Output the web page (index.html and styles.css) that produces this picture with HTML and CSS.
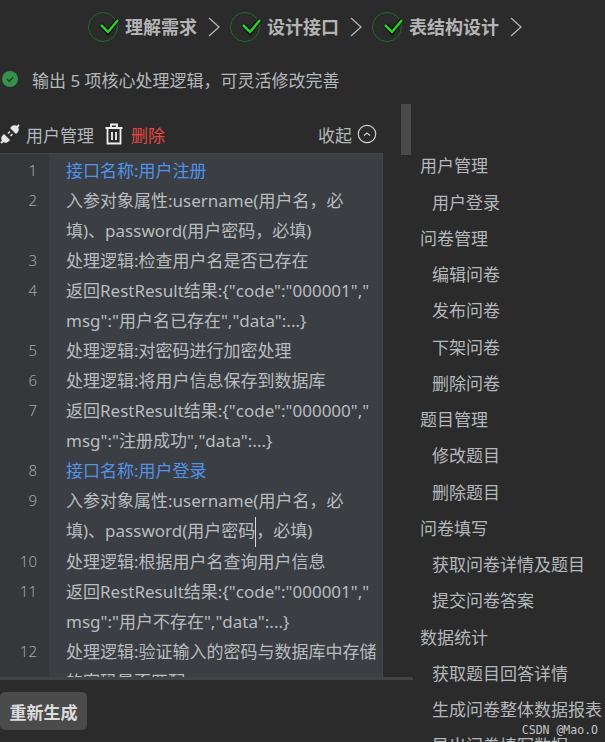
FILE: index.html
```html
<!DOCTYPE html>
<html lang="zh-CN">
<head>
  <meta charset="UTF-8" />
  <meta name="viewport" content="width=device-width, initial-scale=1.0"/>
  <title>核心处理逻辑</title>
  <link rel="stylesheet" href="styles.css">
</head>
<body>
  <div class="page">
    <!-- 顶部步骤 -->
    <div class="steps">
      <div class="step">
        <svg class="step-check" viewBox="0 0 32 32"><circle cx="15" cy="16" r="14.5"/><path class="tick-bg" d="M13 14l7 7 10-12"/><path class="tick" d="M13 14l7 7 10-12"/></svg>
        <span>理解需求</span>
        <svg class="step-arrow" viewBox="0 0 14 22"><path d="M2 2l10 9-10 9"/></svg>
      </div>
      <div class="step">
        <svg class="step-check" viewBox="0 0 32 32"><circle cx="15" cy="16" r="14.5"/><path class="tick-bg" d="M13 14l7 7 10-12"/><path class="tick" d="M13 14l7 7 10-12"/></svg>
        <span>设计接口</span>
        <svg class="step-arrow" viewBox="0 0 14 22"><path d="M2 2l10 9-10 9"/></svg>
      </div>
      <div class="step">
        <svg class="step-check" viewBox="0 0 32 32"><circle cx="15" cy="16" r="14.5"/><path class="tick-bg" d="M13 14l7 7 10-12"/><path class="tick" d="M13 14l7 7 10-12"/></svg>
        <span>表结构设计</span>
        <svg class="step-arrow" viewBox="0 0 14 22"><path d="M2 2l10 9-10 9"/></svg>
      </div>
    </div>

    <div class="content">
      <div class="main">
        <div class="status">
          <svg class="status-icon" viewBox="0 0 16 16"><circle cx="8" cy="8" r="8"/><path d="M5 8l2.2 2.2L11 6.2"/></svg>
          <span>输出 5 项核心处理逻辑，可灵活修改完善</span>
        </div>

        <div class="toolbar">
          <svg class="plug" viewBox="0 0 20 20"><path d="M1 19l4-4M15 5l4-4"/><path class="plug-fill" d="M4 10l6 6-1.5 1.5a4 4 0 0 1-6-6zM10 4l6 6 1.5-1.5a4 4 0 0 0-6-6zM7.5 9l2-2 1 1-2 2zM10 11.500l2-2 1 1-2 2z"/></svg>
          <span class="tb-name">用户管理</span>
          <svg class="trash" viewBox="0 0 18 22"><path d="M0.500 5h17M6 5V1.500h6V5M2.500 5v15.500h13V5M7 9v8M11 9v8"/></svg>
          <span class="tb-delete">删除</span>
          <span class="tb-collapse">收起</span>
          <svg class="collapse-icon" viewBox="0 0 20 20"><circle cx="10" cy="10" r="8.700"/><path d="M7 11.500l3-2.500 3 2.500"/></svg>
        </div>

        <div class="editor">
          <div class="line"><span class="num">1</span><div class="code title">接口名称:用户注册</div></div>
          <div class="line"><span class="num">2</span><div class="code">入参对象属性:username(用户名，必<br>填)、password(用户密码，必填)</div></div>
          <div class="line"><span class="num">3</span><div class="code">处理逻辑:检查用户名是否已存在</div></div>
          <div class="line"><span class="num">4</span><div class="code">返回RestResult结果:{"code":"000001","<br>msg":"用户名已存在","data":...}</div></div>
          <div class="line"><span class="num">5</span><div class="code">处理逻辑:对密码进行加密处理</div></div>
          <div class="line"><span class="num">6</span><div class="code">处理逻辑:将用户信息保存到数据库</div></div>
          <div class="line"><span class="num">7</span><div class="code">返回RestResult结果:{"code":"000000","<br>msg":"注册成功","data":...}</div></div>
          <div class="line"><span class="num">8</span><div class="code title">接口名称:用户登录</div></div>
          <div class="line"><span class="num">9</span><div class="code">入参对象属性:username(用户名，必<br>填)、password(用户密码<i class="caret"></i>，必填)</div></div>
          <div class="line"><span class="num">10</span><div class="code">处理逻辑:根据用户名查询用户信息</div></div>
          <div class="line"><span class="num">11</span><div class="code">返回RestResult结果:{"code":"000001","<br>msg":"用户不存在","data":...}</div></div>
          <div class="line"><span class="num">12</span><div class="code">处理逻辑:验证输入的密码与数据库中存储<br>的密码是否匹配</div></div>
        </div>
        <div class="hbar"></div>

        <div class="footer">
          <button class="regen">重新生成</button>
        </div>
      </div>

      <!-- 右侧目录 -->
      <div class="outline">
        <div class="o-item">用户管理</div>
        <div class="o-item sub">用户登录</div>
        <div class="o-item">问卷管理</div>
        <div class="o-item sub">编辑问卷</div>
        <div class="o-item sub">发布问卷</div>
        <div class="o-item sub">下架问卷</div>
        <div class="o-item sub">删除问卷</div>
        <div class="o-item">题目管理</div>
        <div class="o-item sub">修改题目</div>
        <div class="o-item sub">删除题目</div>
        <div class="o-item">问卷填写</div>
        <div class="o-item sub">获取问卷详情及题目</div>
        <div class="o-item sub">提交问卷答案</div>
        <div class="o-item">数据统计</div>
        <div class="o-item sub">获取题目回答详情</div>
        <div class="o-item sub">生成问卷整体数据报表</div>
        <div class="o-item sub">导出问卷填写数据</div>
      </div>
    </div>

    <div class="vscroll"></div>
    <div class="watermark">CSDN @Mao.O</div>
  </div>
</body>
</html>
```

FILE: styles.css
```css
* { box-sizing: border-box; }
html, body { margin: 0; height: 100%; background: #2b2b2b; overflow: hidden; }
body { font-family: "Noto Sans", "Noto Sans CJK SC", sans-serif; color: #b9bcbf; }

.page {
  position: relative;
  width: 605px;
  height: 742px;
  overflow: hidden;
  display: flex;
  flex-direction: column;
}

/* 顶部步骤 */
.steps {
  height: 54px;
  flex: none;
  display: flex;
  align-items: center;
  padding-left: 88px;
}
.step { display: flex; align-items: center; }
.step span { font-size: 18px; font-weight: 700; color: #b4b4b4; margin-left: 5px; line-height: 1; }
.step-check { width: 32px; height: 32px; fill: none; }
.step-check circle { stroke: #1f6b2a; stroke-width: 1; }
.step-check .tick-bg { stroke: #0b0b0b; stroke-width: 5; }
.step-check .tick { stroke: #22d81f; stroke-width: 2.500; }
.step-arrow { width: 14px; height: 22px; margin: 0 9px 0 10px; fill: none; stroke: #b4b4b4; stroke-width: 1.300; }

.content {
  flex: 1;
  min-height: 0;
  display: grid;
  grid-template-columns: 413px 1fr;
}
.main { display: flex; flex-direction: column; min-height: 0; }

.status {
  height: 50px;
  display: flex;
  align-items: center;
  gap: 14px;
  padding-left: 2px;
  font-size: 17px;
  color: #b4b8bb;
}
.status-icon { width: 16px; height: 16px; flex: none; }
.status-icon circle { fill: #34924a; }
.status-icon path { fill: none; stroke: #1d3d25; stroke-width: 1.300; }

.toolbar {
  width: 383px;
  height: 49px;
  display: flex;
  align-items: center;
  font-size: 17px;
  padding-top: 11px;
}
.plug { width: 20px; height: 20px; flex: none; stroke: #e6e6e6; stroke-width: 2; fill: none; }
.plug-fill { fill: #e6e6e6; stroke: none; }
.tb-name { margin-left: 6px; color: #b4b8bb; }
.trash { width: 18px; height: 22px; flex: none; margin-left: 11px; fill: none; stroke: #efefef; stroke-width: 1.800; }
.tb-delete { margin-left: 8px; color: #e5473f; }
.tb-collapse { margin-left: auto; font-size: 17px; color: #b4b8bb; }
.collapse-icon { width: 20px; height: 20px; flex: none; margin: 0 6px 0 5px; fill: none; stroke: #cfcfcf; stroke-width: 1.200; }

/* 编辑器 */
.editor {
  width: 383px;
  height: 524px;
  flex: none;
  overflow: hidden;
  padding-top: 2px;
  border-top: 1px solid #45484b;
  border-right: 1px solid #45484b;
  background: linear-gradient(to right, #35383b 49px, #3b3f43 49px);
}
.line { display: flex; }
.num {
  width: 49px;
  flex: none;
  padding-right: 12px;
  text-align: right;
  font-size: 15px;
  font-weight: 300;
  line-height: 28px;
  color: #a4a7aa;
}
.code {
  padding-left: 17px;
  font-size: 17px;
  line-height: 30px;
  white-space: nowrap;
  color: #b9bcbf;
}
.code.title { color: #4f93ea; }
.caret {
  display: inline-block;
  width: 1px;
  height: 30px;
  vertical-align: middle;
  background: #d8d8d8;
}

.hbar { width: 413px; height: 3px; flex: none; background: #414446; }

.footer { flex: 1; padding-top: 12px; }
.regen {
  display: block;
  width: 87px;
  height: 38px;
  padding: 0;
  border: none;
  border-radius: 5px;
  background: #4b4b4b;
  color: #dcdcdc;
  font-family: inherit;
  font-size: 17px;
  font-weight: 700;
}

/* 右侧目录 */
.outline { padding: 94.400px 0 0 7px; min-width: 0; }
.o-item {
  height: 36.250px;
  line-height: 36.250px;
  font-size: 17px;
  white-space: nowrap;
  color: #b4b8bb;
}
.o-item.sub { padding-left: 12px; }

.vscroll {
  position: absolute;
  left: 401px;
  top: 104px;
  width: 10px;
  height: 51px;
  background: #4a4a4a;
}
.watermark {
  position: absolute;
  right: 7px;
  top: 722px;
  font-family: "DejaVu Sans Mono", monospace;
  font-size: 11.500px;
  line-height: 16px;
  color: #c4c4c4;
}
```
